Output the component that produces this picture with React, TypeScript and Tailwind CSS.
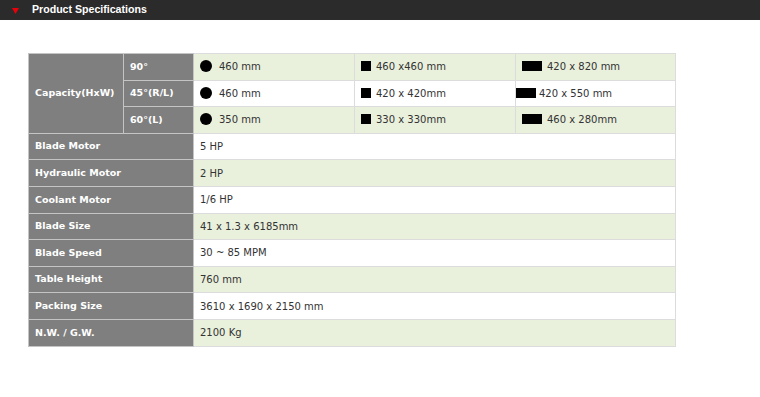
import React from "react";

const GREEN = "bg-[#e9f0dc]";
const WHITE = "bg-white";

const valueFont = { fontFamily: '"DejaVu Sans", Verdana, sans-serif' };

function Circle() {
  return <span className="inline-block w-[12px] h-[12px] rounded-full bg-black mr-[7px] align-[-2px]" />;
}
function Square() {
  return <span className="inline-block w-[10px] h-[10px] bg-black mr-[5px] align-[-1px]" />;
}
function Rect() {
  return <span className="inline-block w-[20px] h-[10px] bg-black mr-[5px] align-[-1px]" />;
}

const labelCls =
  "bg-[#7f7f7f] text-white font-bold text-[9.5px] pl-[6px] border border-[#c4c4c4] whitespace-nowrap";
const valCls = "text-[#333] text-[10px] pl-[6px] border border-[#dcdcdc] whitespace-nowrap";

const singles: [string, string][] = [
  ["Blade Motor", "5 HP"],
  ["Hydraulic Motor", "2 HP"],
  ["Coolant Motor", "1/6 HP"],
  ["Blade Size", "41 x 1.3 x 6185mm"],
  ["Blade Speed", "30 ~ 85 MPM"],
  ["Table Height", "760 mm"],
  ["Packing Size", "3610 x 1690 x 2150 mm"],
  ["N.W. / G.W.", "2100 Kg"],
];

export default function App() {
  return (
    <div className="w-[760px] h-[397px] bg-white relative overflow-hidden" style={valueFont}>
      <div className="h-[20px] bg-[#2b2b2b] flex items-center">
        <svg width="7" height="6" viewBox="0 0 7 6" className="ml-[12px] mt-[1px]">
          <polygon points="0,0 7,0 3.5,6" fill="#e8000b" />
        </svg>
        <span
          className="ml-[13px] text-white font-bold text-[10.6px]"
          style={{ fontFamily: '"Liberation Sans", Arial, sans-serif' }}
        >
          Product Specifications
        </span>
      </div>
      <div className="pl-[28px] pt-[33px]">
        <table className="table-fixed border-collapse w-[647px]">
          <colgroup>
            <col className="w-[95px]" />
            <col className="w-[70px]" />
            <col className="w-[161px]" />
            <col className="w-[161px]" />
            <col className="w-[160px]" />
          </colgroup>
          <tbody>
            <tr className="h-[26.6px]">
              <td rowSpan={3} className={labelCls}>Capacity(HxW)</td>
              <td className={labelCls}>90°</td>
              <td className={`${valCls} ${GREEN}`}><Circle />460 mm</td>
              <td className={`${valCls} ${GREEN}`}><Square />460 x460 mm</td>
              <td className={`${valCls} ${GREEN}`}><Rect />420 x 820 mm</td>
            </tr>
            <tr className="h-[26.6px]">
              <td className={labelCls}>45°(R/L)</td>
              <td className={`${valCls} ${WHITE}`}><Circle />460 mm</td>
              <td className={`${valCls} ${WHITE}`}><Square />420 x 420mm</td>
              <td className={`text-[#333] text-[10px] border border-[#dcdcdc] whitespace-nowrap ${WHITE}`}>
                <span className="inline-block w-[20px] h-[10px] bg-black mr-[3px] align-[-1px]" />420 x 550 mm
              </td>
            </tr>
            <tr className="h-[26.6px]">
              <td className={labelCls}>60°(L)</td>
              <td className={`${valCls} ${GREEN}`}><Circle />350 mm</td>
              <td className={`${valCls} ${GREEN}`}><Square />330 x 330mm</td>
              <td className={`${valCls} ${GREEN}`}><Rect />460 x 280mm</td>
            </tr>
            {singles.map(([k, v], i) => (
              <tr key={k} className="h-[26.6px]">
                <td colSpan={2} className={labelCls}>{k}</td>
                <td colSpan={3} className={`${valCls} ${i % 2 === 0 ? WHITE : GREEN}`}>{v}</td>
              </tr>
            ))}
          </tbody>
        </table>
      </div>
    </div>
  );
}
